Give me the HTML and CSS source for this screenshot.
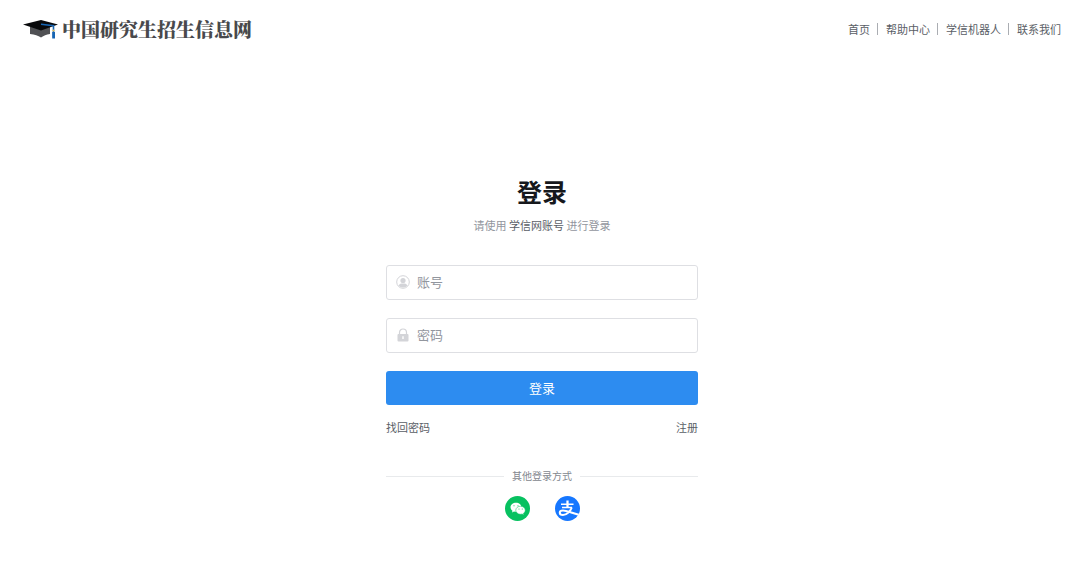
FILE: index.html
```html
<!DOCTYPE html>
<html lang="zh-CN">
<head>
<meta charset="utf-8">
<meta name="viewport" content="width=device-width, initial-scale=1">
<title>登录</title>
<link rel="stylesheet" href="styles.css">
</head>
<body>
<header class="header">
  <a class="brand" href="#">
    <svg class="brand-icon" viewBox="0 0 36 20" aria-hidden="true">
      <path d="M7 8v7c5 .6 8 1.600 11 3.500 3-1.900 5-2.900 9-3.500V8z" fill="#505154"/>
      <path d="M0 5.500 18 1l17 4.500L18 11.500z" fill="#08090b"/>
      <path d="M18 5.300 30.500 6.800V18.500" fill="none" stroke="#1765b3" stroke-width="1.600"/>
      <path d="M29.200 13h2.800v6.500h-2.800z" fill="#1765b3"/>
      <circle cx="30.500" cy="11.500" r="1.100" fill="#e6c25b"/>
    </svg>
    <span class="brand-name">中国研究生招生信息网</span>
  </a>
  <nav class="nav">
    <a href="#">首页</a>
    <a href="#">帮助中心</a>
    <a href="#">学信机器人</a>
    <a href="#">联系我们</a>
  </nav>
</header>
<main class="main">
  <form class="login">
    <h1 class="title">登录</h1>
    <p class="hint">请使用 <strong>学信网账号</strong> 进行登录</p>
    <label class="field">
      <svg class="field-icon" viewBox="0 0 14 14" aria-hidden="true">
        <circle cx="7" cy="7" r="6.300" fill="none" stroke="#d3d4d8"/>
        <circle cx="7" cy="5.500" r="2.600" fill="#d3d4d8"/>
        <path d="M2.500 10.500c1-1.700 2.500-2 4.500-2s3.500.3 4.500 2A5.500 5.500 0 0 1 7 12.500a5.500 5.500 0 0 1-4.500-2z" fill="#d3d4d8"/>
      </svg>
      <input class="input" type="text" placeholder="账号" aria-label="账号">
    </label>
    <label class="field">
      <svg class="field-icon" viewBox="0 0 14 14" aria-hidden="true">
        <path d="M3.500 7V4.500a3.500 3.500 0 0 1 7 0V7" fill="none" stroke="#d3d4d8" stroke-width="1.200"/>
        <rect x="1.500" y="6" width="11" height="7.500" rx="1" fill="#d3d4d8"/>
        <path d="M7 8.300v2.700" stroke="#fff" stroke-width="1.400"/>
      </svg>
      <input class="input" type="password" placeholder="密码" aria-label="密码">
    </label>
    <button class="submit" type="submit">登录</button>
    <div class="links">
      <a href="#">找回密码</a>
      <a href="#">注册</a>
    </div>
    <div class="divider">其他登录方式</div>
    <div class="socials">
      <a class="social" href="#" aria-label="微信登录">
        <svg viewBox="0 0 50 50" aria-hidden="true">
          <circle cx="25" cy="25" r="25" fill="#07c160"/>
          <path d="M22 13.500c-6 0-11 4-11 9 0 2.900 1.600 5.300 4 7l-1 3.500 4-2c1.300.4 2.600.5 4 .5 6 0 11-4 11-9s-5-9-11-9z" fill="#fff"/>
          <path d="M31 20.500c-5.200 0-9.500 3.500-9.500 8s4.300 8 9.500 8c1.100 0 2.200-.2 3.200-.5l3.600 1.900-.9-3.200c2.200-1.500 3.600-3.700 3.600-6.200 0-4.500-4.300-8-9.500-8z" fill="#fff" stroke="#07c160" stroke-width="1"/>
          <g fill="#07c160"><circle cx="18" cy="19.500" r="1.200"/><circle cx="26" cy="19.500" r="1.200"/><circle cx="28" cy="26" r="1"/><circle cx="34.500" cy="26" r="1"/></g>
        </svg>
      </a>
      <a class="social" href="#" aria-label="支付宝登录">
        <svg viewBox="0 0 50 50" aria-hidden="true">
          <circle cx="25" cy="25" r="25" fill="#1677ff"/>
          <g fill="none" stroke="#fff" stroke-width="3">
            <path d="M12 16.500h25M14 23h20" />
            <path d="M25 9v14" stroke-width="4.500"/>
            <path d="M33.500 23C31 30 24 38 16 38c-4 0-6.500-2-6.500-4.500 0-3 3-4.500 6.500-4.500 6 0 14 3.500 31.500 8.500" stroke-width="4"/>
          </g>
        </svg>
      </a>
    </div>
  </form>
</main>
</body>
</html>
```
FILE: styles.css
```css
* {
  box-sizing: border-box;
}

body {
  margin: 0;
  background: #fff;
  color: #5a5e66;
  font: 11px/16px "Noto Sans CJK SC", sans-serif;
}

a {
  color: inherit;
  text-decoration: none;
}

.header {
  display: flex;
  align-items: center;
  justify-content: space-between;
  height: 57px;
  padding: 0 19px 0 23px;
}

.brand {
  display: flex;
  align-items: center;
  gap: 3px;
}

.brand-icon {
  width: 36px;
  height: 20px;
}

.brand-name {
  color: #48494c;
  font: 900 19px/28px "Noto Serif CJK SC", "Noto Sans CJK SC", serif;
}

.nav {
  display: flex;
  align-items: center;
}

.nav a {
  line-height: 12px;
}

.nav a + a {
  margin-left: 7px;
  padding-left: 8px;
  border-left: 1px solid #aaadb2;
}

.main {
  display: flex;
  justify-content: center;
  padding: 116px 16px 32px 20px;
}

.login {
  width: 100%;
  max-width: 312px;
}

.title {
  margin: 0;
  color: #16181c;
  font-size: 25px;
  font-weight: 700;
  line-height: 36px;
  text-align: center;
}

.hint {
  margin: 8px 0 32px;
  color: #92969e;
  text-align: center;
}

.hint strong {
  color: #5a5e66;
  font-weight: 400;
}

.field {
  display: flex;
  align-items: center;
  gap: 7px;
  height: 35px;
  margin-bottom: 18px;
  padding: 0 9px 2px;
  border: 1px solid #dedfe3;
  border-radius: 3px;
}

.field-icon {
  flex: none;
  width: 14px;
  height: 14px;
}

.input {
  flex: 1;
  min-width: 0;
  padding: 0;
  border: 0;
  outline: 0;
  background: transparent;
  color: #303338;
  font: 13px/20px "Noto Sans CJK SC", sans-serif;
}

.input::placeholder {
  color: #92969e;
  opacity: 1;
}

.submit {
  display: block;
  width: 100%;
  height: 34px;
  padding: 0;
  border: 0;
  border-radius: 3px;
  background: #2d8cf0;
  color: #fff;
  font: 13px/20px "Noto Sans CJK SC", sans-serif;
}

.links {
  display: flex;
  justify-content: space-between;
  margin-top: 14px;
}

.divider {
  display: flex;
  align-items: center;
  gap: 8px;
  margin-top: 33px;
  color: #84888f;
  font-size: 10px;
}

.divider::before,
.divider::after {
  flex: 1;
  height: 1px;
  background: #e8eaec;
  content: "";
}

.socials {
  display: flex;
  justify-content: center;
  gap: 25px;
  margin-top: 12px;
}

.social,
.social svg {
  display: block;
  width: 25px;
  height: 25px;
}
```
